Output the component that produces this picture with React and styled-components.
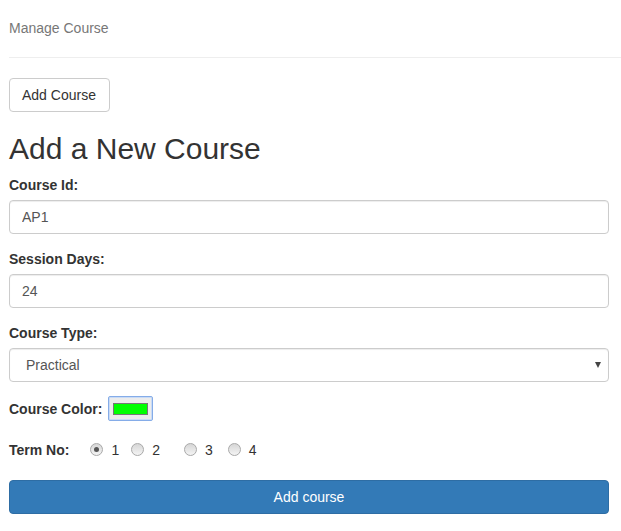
import React from "react";
import styled, { createGlobalStyle } from "styled-components";

const Global = createGlobalStyle`
  html, body { margin: 0; padding: 0; background: #fff; }
  body {
    font-family: "Liberation Sans", Arial, Helvetica, sans-serif;
    font-size: 14px;
    line-height: 1.42857143;
    color: #333;
  }
  * { box-sizing: border-box; }
`;

const Page = styled.div`
  padding-left: 9px;
`;

const Header = styled.header`
  padding: 18px 0 19px;
  border-bottom: 1px solid #eee;
  color: #777;
  font-size: 14px;
  line-height: 20px;
`;

const Content = styled.main`
  padding: 20px 12px 0 0;
`;

const DefaultButton = styled.button`
  display: inline-block;
  height: 34px;
  padding: 6px 13px 6px 12px;
  font-family: inherit;
  font-size: 14px;
  line-height: 20px;
  color: #333;
  background: #fff;
  border: 1px solid #ccc;
  border-radius: 4px;
  cursor: pointer;
`;

const Title = styled.h2`
  margin: 20px 0 10px;
  font-size: 30px;
  font-weight: 500;
  line-height: 1.1;
  color: #333;
`;

const Group = styled.div`
  margin-bottom: 15px;
`;

const Label = styled.label`
  display: inline-block;
  margin-bottom: 5px;
  font-weight: bold;
  line-height: 20px;
`;

const TextInput = styled.input`
  display: block;
  width: 100%;
  height: 34px;
  padding: 6px 12px;
  font-family: inherit;
  font-size: 14px;
  line-height: 20px;
  color: #555;
  background: #fff;
  border: 1px solid #ccc;
  border-radius: 4px;
  box-shadow: inset 0 1px 1px rgba(0, 0, 0, 0.075);
  outline: none;
`;

const SelectWrap = styled.div`
  position: relative;
`;

const Select = styled.select`
  display: block;
  width: 100%;
  height: 34px;
  padding: 6px 24px 6px 16px;
  font-family: inherit;
  font-size: 14px;
  line-height: 20px;
  color: #555;
  background: #fff;
  border: 1px solid #ccc;
  border-radius: 4px;
  box-shadow: inset 0 1px 1px rgba(0, 0, 0, 0.075);
  appearance: none;
  -webkit-appearance: none;
  outline: none;
`;

const Arrow = styled.span`
  position: absolute;
  right: 8px;
  top: 14px;
  width: 0;
  height: 0;
  border-left: 3.5px solid transparent;
  border-right: 3.5px solid transparent;
  border-top: 6px solid #444;
  pointer-events: none;
`;

const InlineRow = styled.div`
  display: flex;
  align-items: center;
  margin-top: ${(p) => p.$mt || 0}px;
  margin-bottom: ${(p) => p.$mb}px;
  min-height: ${(p) => p.$h}px;
`;

const InlineLabel = styled.label`
  font-weight: bold;
  line-height: 20px;
  margin-right: ${(p) => p.$mr}px;
`;

const ColorInput = styled.input`
  width: 45px;
  height: 25px;
  padding: 0;
  margin: 0;
  border: 1px solid #85ace8;
  border-radius: 2px;
  background: #ececec;
  box-shadow: inset 0 0 0 1px #c9dbf6;
  cursor: pointer;
  -webkit-appearance: none;
  appearance: none;
  &::-webkit-color-swatch-wrapper {
    padding: 6px 4px 5px;
  }
  &::-webkit-color-swatch {
    border: 1px solid #777;
    border-radius: 0;
  }
`;

const RadioOption = styled.label`
  display: inline-flex;
  align-items: center;
  margin-right: ${(p) => p.$mr}px;
  line-height: 20px;
  color: #333;
`;

const Radio = styled.input`
  -webkit-appearance: none;
  appearance: none;
  width: 13px;
  height: 13px;
  margin: 0 8px 0 0;
  border: 1px solid #a9a9a9;
  border-radius: 50%;
  background: linear-gradient(#d6d6d6, #f4f4f4);
  position: relative;
  top: -1px;
  &:checked::after {
    content: "";
    position: absolute;
    left: 3px;
    top: 3px;
    width: 5px;
    height: 5px;
    border-radius: 50%;
    background: #555;
  }
`;

const PrimaryButton = styled.button`
  display: block;
  width: 100%;
  height: 34px;
  margin-top: 20px;
  padding: 6px 12px;
  font-family: inherit;
  font-size: 14px;
  line-height: 20px;
  color: #fff;
  background: #337ab7;
  border: 1px solid #2e6da4;
  border-radius: 4px;
  cursor: pointer;
`;

const terms = [
  { v: "1", mr: 12 },
  { v: "2", mr: 24 },
  { v: "3", mr: 15 },
  { v: "4", mr: 0 },
];

export default function App() {
  return (
    <Page>
      <Global />
      <Header>Manage Course</Header>
      <Content>
        <DefaultButton type="button">Add Course</DefaultButton>
        <Title>Add a New Course</Title>
        <form onSubmit={(e) => e.preventDefault()}>
          <Group>
            <Label htmlFor="cid">Course Id:</Label>
            <TextInput id="cid" defaultValue="AP1" />
          </Group>
          <Group>
            <Label htmlFor="days">Session Days:</Label>
            <TextInput id="days" defaultValue="24" />
          </Group>
          <Group>
            <Label htmlFor="ctype">Course Type:</Label>
            <SelectWrap>
              <Select id="ctype" defaultValue="Practical">
                <option>Theory</option>
                <option>Practical</option>
              </Select>
              <Arrow />
            </SelectWrap>
          </Group>
          <InlineRow $mt={-1} $mb={19} $h={25}>
            <InlineLabel htmlFor="ccolor" $mr={6}>Course Color:</InlineLabel>
            <ColorInput id="ccolor" type="color" defaultValue="#00ff00" />
          </InlineRow>
          <InlineRow $mb={0} $h={20}>
            <InlineLabel $mr={21}>Term No:</InlineLabel>
            {terms.map((t) => (
              <RadioOption key={t.v} $mr={t.mr}>
                <Radio type="radio" name="term" value={t.v} defaultChecked={t.v === "1"} />
                {t.v}
              </RadioOption>
            ))}
          </InlineRow>
          <PrimaryButton type="submit">Add course</PrimaryButton>
        </form>
      </Content>
    </Page>
  );
}
